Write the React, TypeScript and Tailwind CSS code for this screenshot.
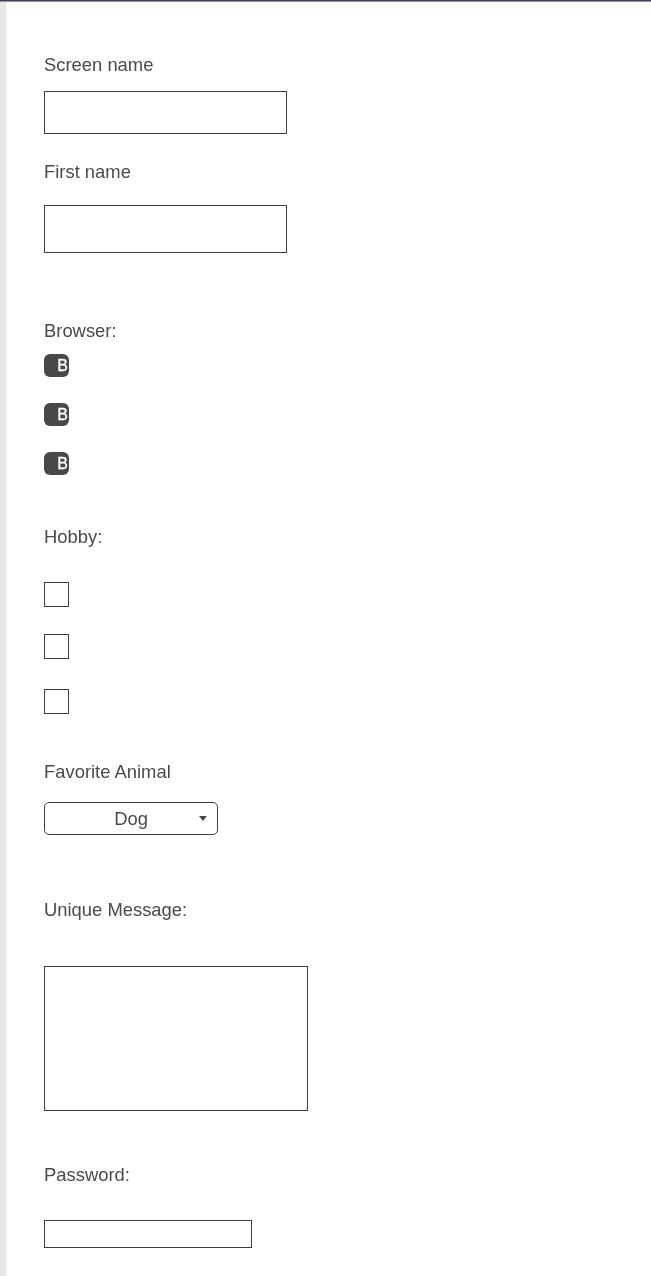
const labelClass = "block h-5 text-[18.4px] leading-5 text-[#4a4a4a]";
const boxClass = "block border border-[#3f3f3f] bg-white";

function RadioPill({ className }: { className: string }) {
  return (
    <div className={`flex h-[23px] w-[25px] items-center justify-end rounded-[6px] bg-[#484848] pr-px text-[16px] leading-none text-white [-webkit-text-stroke:0.3px_white] ${className}`}>
      B
    </div>
  );
}

export default function App() {
  return (
    <div className="h-[1276px] w-[651px] overflow-hidden bg-white font-['Liberation_Sans',Arial,sans-serif]">
      <div className="h-[2px] border-b border-[#9497a3] bg-[#3a3f52]" />
      <div className="flex h-[1274px]">
        <div className="w-[7px] border-r border-[#f2f2f2] bg-[#e8e8e8]" />
        <form className="pl-[37px] will-change-transform">
          <label className={`${labelClass} mt-[53px]`}>Screen name</label>
          <input type="text" className={`${boxClass} mt-4 h-[43px] w-[243px]`} />

          <label className={`${labelClass} mt-7`}>First name</label>
          <input type="text" className={`${boxClass} mt-[23px] h-[48px] w-[243px]`} />

          <label className={`${labelClass} mt-[68px]`}>Browser:</label>
          <RadioPill className="mt-[13px]" />
          <RadioPill className="mt-[26px]" />
          <RadioPill className="mt-[26px]" />

          <label className={`${labelClass} mt-[52px]`}>Hobby:</label>
          <input type="text" readOnly className={`${boxClass} mt-[35px] h-[25px] w-[25px]`} />
          <input type="text" readOnly className={`${boxClass} mt-[27px] h-[25px] w-[25px]`} />
          <input type="text" readOnly className={`${boxClass} mt-[30px] h-[25px] w-[25px]`} />

          <label className={`${labelClass} mt-12`}>Favorite Animal</label>
          <div className="relative mt-5 flex h-[33px] w-[174px] items-center justify-center rounded-[5px] border border-[#3f3f3f] text-[18.4px] text-[#4a4a4a]">
            Dog
            <svg className="absolute right-[10px] top-[13px] h-[5px] w-[8px]" viewBox="0 0 8 5">
              <path d="M0 0h8L4 5z" fill="#484848" />
            </svg>
          </div>

          <label className={`${labelClass} mt-[65px]`}>Unique Message:</label>
          <textarea className={`${boxClass} mt-[46px] h-[145px] w-[264px] resize-none`} />

          <label className={`${labelClass} mt-[54px]`}>Password:</label>
          <input type="password" className={`${boxClass} mt-[35px] h-[28px] w-[208px]`} />
        </form>
      </div>
    </div>
  );
}
